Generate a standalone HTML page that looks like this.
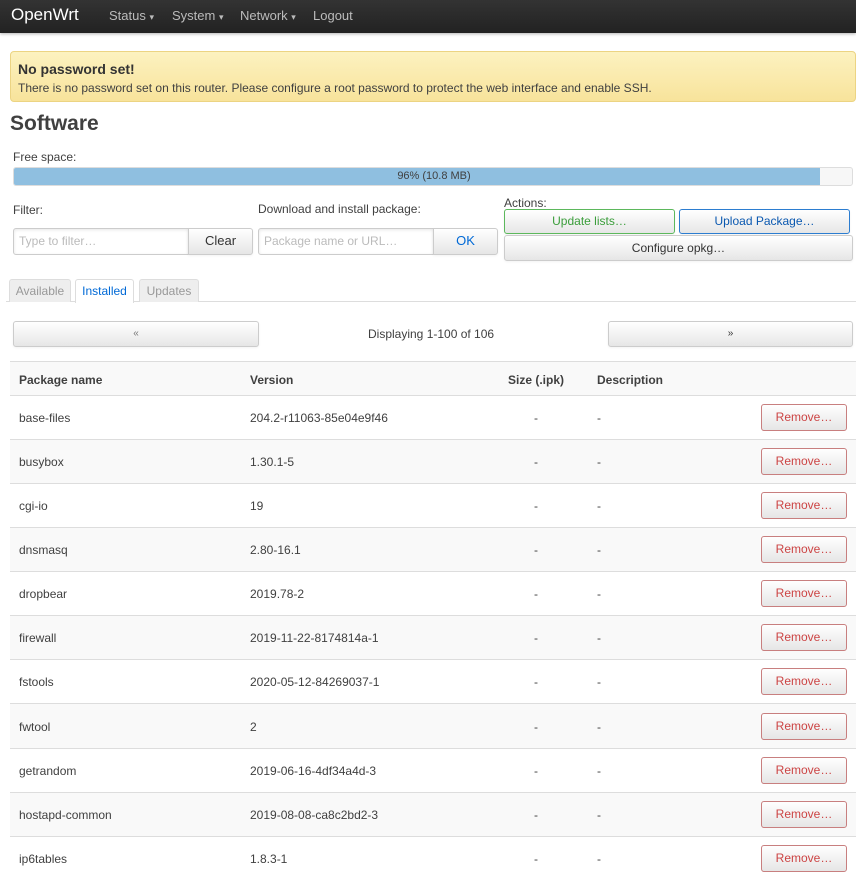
<!DOCTYPE html>
<html><head><meta charset="utf-8"><style>
*{box-sizing:border-box}
body{margin:0;width:856px;height:877px;overflow:hidden;background:#fff;font-family:"Liberation Sans",Arial,sans-serif;font-size:12px;color:#404040;position:relative}
.a{position:absolute}
.nav{left:0;top:0;width:856px;height:33px;background:linear-gradient(#333,#222);box-shadow:0 1px 3px rgba(0,0,0,.3)}
.btn{position:absolute;border:1px solid #ccc;border-radius:3px;background:linear-gradient(#fff,#e6e6e6);text-align:center;font-size:12px;color:#333;box-shadow:inset 0 1px 0 rgba(255,255,255,.2),0 1px 2px rgba(0,0,0,.05)}
.inp{position:absolute;border:1px solid #ccc;border-radius:3px 0 0 3px;background:#fff;color:#bbb;font-size:12px;padding-left:5px;box-shadow:inset 0 1px 3px rgba(0,0,0,.1)}
.row{position:absolute;left:10px;width:846px;height:44px;border-top:1px solid #ddd;font-size:12px;color:#404040}
.row span{position:absolute;top:15px}
.rm{position:absolute;left:751px;top:8px;width:86px;height:27px;border:1px solid #c87f7f;border-radius:3px;background:linear-gradient(#fff,#e6e6e6);color:#c44;text-align:center;line-height:25px}
.tab{position:absolute;top:279px;height:23px;border:1px solid #ddd;border-bottom:none;border-radius:3px 3px 0 0;background:#eee;color:#999;line-height:22px;text-align:center}
</style></head><body>
<div class="a nav">
 <div class="a" style="left:11px;top:5px;font-size:17px;color:#fff">OpenWrt</div>
 <div class="a" style="left:109px;top:8px;font-size:13px;color:#bbb">Status <span style="font-size:9px">▾</span></div>
 <div class="a" style="left:172px;top:8px;font-size:13px;color:#bbb">System <span style="font-size:9px">▾</span></div>
 <div class="a" style="left:240px;top:8px;font-size:13px;color:#bbb">Network <span style="font-size:9px">▾</span></div>
 <div class="a" style="left:313px;top:8px;font-size:13px;color:#bbb">Logout</div>
</div>
<div class="a" style="left:10px;top:51px;width:846px;height:51px;background:#fbeba5;border:1px solid #ecd483;border-radius:4px;background:linear-gradient(#fcf2c0,#f8e39b)">
 <div class="a" style="left:7px;top:9px;font-size:14px;font-weight:bold;color:#333">No password set!</div>
 <div class="a" style="left:7px;top:29px;font-size:12px;color:#404040">There is no password set on this router. Please configure a root password to protect the web interface and enable SSH.</div>
</div>
<div class="a" style="left:10px;top:112px;font-size:21px;font-weight:bold;color:#404040">Software</div>
<div class="a" style="left:13px;top:150px">Free space:</div>
<div class="a" style="left:13px;top:167px;width:840px;height:19px;border:1px solid #ddd;border-radius:3px;background:#f7f7f7;overflow:hidden">
 <div class="a" style="left:0;top:0;width:806px;height:17px;background:#8fbfe0"></div>
 <div class="a" style="left:0;top:2px;width:840px;text-align:center;font-size:11px;color:#404040">96% (10.8 MB)</div>
</div>
<div class="a" style="left:13px;top:203px">Filter:</div>
<div class="inp" style="left:13px;top:228px;width:176px;height:27px;line-height:25px">Type to filter…</div>
<div class="btn" style="left:188px;top:228px;width:65px;height:27px;line-height:23px;border-radius:0 3px 3px 0;font-size:13px">Clear</div>
<div class="a" style="left:258px;top:202px;font-size:12px">Download and install package:</div>
<div class="inp" style="left:258px;top:228px;width:176px;height:27px;line-height:25px">Package name or URL…</div>
<div class="btn" style="left:433px;top:228px;width:65px;height:27px;line-height:23px;border-radius:0 3px 3px 0;color:#0069d6;font-size:13px">OK</div>
<div class="a" style="left:504px;top:196px">Actions:</div>
<div class="btn" style="left:504px;top:209px;width:171px;height:25px;line-height:23px;border-color:#5cb85c;color:#3a9d3a">Update lists…</div>
<div class="btn" style="left:679px;top:209px;width:171px;height:25px;line-height:23px;border-color:#2c7dd0;color:#0a58b0">Upload Package…</div>
<div class="btn" style="left:504px;top:235px;width:349px;height:26px;line-height:24px">Configure opkg…</div>
<div class="a" style="left:6px;top:301px;width:850px;height:1px;background:#ddd"></div>
<div class="tab" style="left:9px;width:62px">Available</div>
<div class="tab" style="left:75px;width:59px;background:#fff;color:#0069d6;height:24px">Installed</div>
<div class="tab" style="left:139px;width:60px">Updates</div>
<div class="btn" style="left:13px;top:321px;width:246px;height:26px;line-height:24px;font-size:10px;color:#777">«</div>
<div class="a" style="left:368px;top:327px;font-size:12px">Displaying 1-100 of 106</div>
<div class="btn" style="left:608px;top:321px;width:245px;height:26px;line-height:24px;font-size:10px">»</div>
<div class="row" style="top:361px;height:35px;background:#f9f9f9;font-weight:bold"><span style="left:9px;top:11px">Package name</span><span style="left:240px;top:11px">Version</span><span style="left:498px;top:11px">Size (.ipk)</span><span style="left:587px;top:11px">Description</span></div>
<div class="row" style="top:395px"><span style="left:9px">base-files</span><span style="left:240px">204.2-r11063-85e04e9f46</span><span style="left:524px">-</span><span style="left:587px">-</span><div class="rm">Remove…</div></div>
<div class="row" style="top:439px;background:#f9f9f9"><span style="left:9px">busybox</span><span style="left:240px">1.30.1-5</span><span style="left:524px">-</span><span style="left:587px">-</span><div class="rm">Remove…</div></div>
<div class="row" style="top:483px"><span style="left:9px">cgi-io</span><span style="left:240px">19</span><span style="left:524px">-</span><span style="left:587px">-</span><div class="rm">Remove…</div></div>
<div class="row" style="top:527px;background:#f9f9f9"><span style="left:9px">dnsmasq</span><span style="left:240px">2.80-16.1</span><span style="left:524px">-</span><span style="left:587px">-</span><div class="rm">Remove…</div></div>
<div class="row" style="top:571px"><span style="left:9px">dropbear</span><span style="left:240px">2019.78-2</span><span style="left:524px">-</span><span style="left:587px">-</span><div class="rm">Remove…</div></div>
<div class="row" style="top:615px;background:#f9f9f9"><span style="left:9px">firewall</span><span style="left:240px">2019-11-22-8174814a-1</span><span style="left:524px">-</span><span style="left:587px">-</span><div class="rm">Remove…</div></div>
<div class="row" style="top:659px"><span style="left:9px">fstools</span><span style="left:240px">2020-05-12-84269037-1</span><span style="left:524px">-</span><span style="left:587px">-</span><div class="rm">Remove…</div></div>
<div class="row" style="top:703px;background:#f9f9f9;height:45px"><span style="left:9px;top:16px">fwtool</span><span style="left:240px;top:16px">2</span><span style="left:524px;top:16px">-</span><span style="left:587px;top:16px">-</span><div class="rm" style="top:9px">Remove…</div></div>
<div class="row" style="top:748px"><span style="left:9px">getrandom</span><span style="left:240px">2019-06-16-4df34a4d-3</span><span style="left:524px">-</span><span style="left:587px">-</span><div class="rm">Remove…</div></div>
<div class="row" style="top:792px;background:#f9f9f9"><span style="left:9px">hostapd-common</span><span style="left:240px">2019-08-08-ca8c2bd2-3</span><span style="left:524px">-</span><span style="left:587px">-</span><div class="rm">Remove…</div></div>
<div class="row" style="top:836px"><span style="left:9px">ip6tables</span><span style="left:240px">1.8.3-1</span><span style="left:524px">-</span><span style="left:587px">-</span><div class="rm">Remove…</div></div>
</body></html>
